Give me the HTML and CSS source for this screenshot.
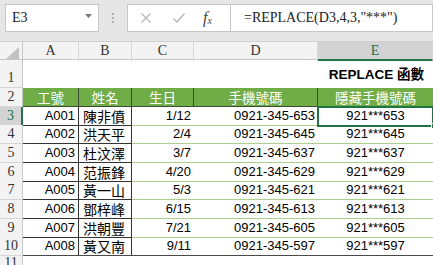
FILE: index.html
```html
<!DOCTYPE html>
<html lang="zh-Hant">
<head>
<meta charset="utf-8">
<link rel="stylesheet" href="styles.css">
</head>
<body>
<div class="app">
  <div class="toolbar">
    <div class="namebox">
      <span class="name">E3</span>
      <svg class="caret" width="7" height="4" viewBox="0 0 7 4"><path d="M0 0H7L3.5 4Z" fill="#777"/></svg>
    </div>
    <div class="grip">
      <span></span><span></span><span></span>
    </div>
    <div class="fxbox">
      <svg class="ico" width="12" height="12" viewBox="0 0 12 12"><path d="M1.5 1.5L10.5 10.5M10.5 1.5L1.5 10.5" stroke="#b4b4b4" stroke-width="1.2" fill="none"/></svg>
      <svg class="ico" width="14" height="12" viewBox="0 0 14 12"><path d="M1.5 6.5L5 10L12.5 1.5" stroke="#b4b4b4" stroke-width="1.2" fill="none"/></svg>
      <span class="fx">f<sub>x</sub></span>
    </div>
    <div class="formula">=REPLACE(D3,4,3,"***")</div>
  </div>

  <div class="sheet">
    <div class="row colhead">
      <div class="corner"><svg width="14" height="12" viewBox="0 0 14 12"><path d="M13 0V12H0Z" fill="#c2c2c2"/></svg></div>
      <div class="ch">A</div>
      <div class="ch">B</div>
      <div class="ch">C</div>
      <div class="ch">D</div>
      <div class="ch sel">E</div>
    </div>

    <div class="row r1">
      <div class="rh">1</div>
      <div class="c"></div>
      <div class="c"></div>
      <div class="c"></div>
      <div class="c"></div>
      <div class="c title">REPLACE 函數</div>
    </div>

    <div class="row data head">
      <div class="rh">2</div>
      <div class="c">工號</div>
      <div class="c">姓名</div>
      <div class="c">生日</div>
      <div class="c">手機號碼</div>
      <div class="c">隱藏手機號碼</div>
    </div>

    <div class="row data body">
      <div class="rh rsel">3</div>
      <div class="c a">A001</div>
      <div class="c b">陳非僨</div>
      <div class="c n">1/12</div>
      <div class="c n">0921-345-653</div>
      <div class="c e cur">921***653<span class="handle"></span></div>
    </div>
    <div class="row data body">
      <div class="rh">4</div>
      <div class="c a">A002</div>
      <div class="c b">洪天平</div>
      <div class="c n">2/4</div>
      <div class="c n">0921-345-645</div>
      <div class="c e">921***645</div>
    </div>
    <div class="row data body">
      <div class="rh">5</div>
      <div class="c a">A003</div>
      <div class="c b">杜汶澤</div>
      <div class="c n">3/7</div>
      <div class="c n">0921-345-637</div>
      <div class="c e">921***637</div>
    </div>
    <div class="row data body">
      <div class="rh">6</div>
      <div class="c a">A004</div>
      <div class="c b">范振鋒</div>
      <div class="c n">4/20</div>
      <div class="c n">0921-345-629</div>
      <div class="c e">921***629</div>
    </div>
    <div class="row data body">
      <div class="rh">7</div>
      <div class="c a">A005</div>
      <div class="c b">黃一山</div>
      <div class="c n">5/3</div>
      <div class="c n">0921-345-621</div>
      <div class="c e">921***621</div>
    </div>
    <div class="row data body">
      <div class="rh">8</div>
      <div class="c a">A006</div>
      <div class="c b">鄧梓峰</div>
      <div class="c n">6/15</div>
      <div class="c n">0921-345-613</div>
      <div class="c e">921***613</div>
    </div>
    <div class="row data body">
      <div class="rh">9</div>
      <div class="c a">A007</div>
      <div class="c b">洪朝豐</div>
      <div class="c n">7/21</div>
      <div class="c n">0921-345-605</div>
      <div class="c e">921***605</div>
    </div>
    <div class="row data body last">
      <div class="rh">10</div>
      <div class="c a">A008</div>
      <div class="c b">黃又南</div>
      <div class="c n">9/11</div>
      <div class="c n">0921-345-597</div>
      <div class="c e">921***597</div>
    </div>
    <div class="row r11">
      <div class="rh">11</div>
      <div class="c"></div>
      <div class="c"></div>
      <div class="c"></div>
      <div class="c"></div>
      <div class="c"></div>
    </div>
  </div>
</div>
</body>
</html>
```

FILE: styles.css
```css
* { box-sizing: border-box; }
html, body { margin: 0; padding: 0; background: #fff; }
.app {
  width: 433px;
  height: 265px;
  overflow: hidden;
  font-family: "Liberation Sans", Arial, "Noto Sans CJK TC", sans-serif;
  color: #000;
}

/* ---------- formula bar ---------- */
.toolbar {
  height: 42px;
  background: #e6e6e6;
  display: flex;
  align-items: flex-start;
  padding: 4px 0 0 5px;
  border-bottom: 1px solid #d0d0d0;
}
.namebox {
  flex: none;
  width: 94px;
  height: 28px;
  background: #fff;
  border: 1px solid #c6c6c6;
  display: flex;
  align-items: center;
  justify-content: space-between;
  padding: 0 6px 0 6px;
}
.name {
  font-family: "Liberation Serif", "Times New Roman", serif;
  font-size: 14px;
  color: #222;
}
.caret { margin-bottom: 4px; }
.grip {
  flex: none;
  width: 28px;
  height: 28px;
  display: flex;
  flex-direction: column;
  align-items: center;
  justify-content: center;
  gap: 2px;
}
.grip span {
  width: 2px;
  height: 2px;
  background: #b0b0b0;
}
.fxbox {
  flex: none;
  width: 103px;
  height: 28px;
  background: #fff;
  border: 1px solid #c6c6c6;
  border-right: none;
  display: flex;
  align-items: center;
  padding-left: 12px;
  gap: 20px;
}
.ico { flex: none; }
.fx {
  font-family: "Liberation Serif", serif;
  font-style: italic;
  font-size: 16px;
  color: #444;
  margin-left: -3px;
}
.fx sub { font-size: 10px; vertical-align: -1px; }
.formula {
  flex: 1;
  height: 28px;
  background: #fff;
  border: 1px solid #c6c6c6;
  display: flex;
  align-items: center;
  padding-left: 13px;
  font-family: "Liberation Serif", "Times New Roman", serif;
  font-size: 14px;
  color: #222;
  white-space: nowrap;
}

/* ---------- sheet ---------- */
.sheet { display: flex; flex-direction: column; }
.row {
  display: grid;
  grid-template-columns: 23px 56px 53px 62px 124px 115px;
}
.colhead {
  height: 18px;
  background: #f3f3f3;
  border-bottom: 1px solid #c6c6c6;
}
.corner {
  border-right: 1px solid #c6c6c6;
  display: flex;
  align-items: flex-end;
  justify-content: flex-end;
  padding: 0 2px 2px 0;
}
.ch {
  font-family: "Liberation Serif", "Times New Roman", serif;
  font-size: 14px;
  color: #333;
  text-align: center;
  line-height: 17px;
  border-right: 1px solid #d6d6d6;
}
.ch.sel {
  background: #d3d3d3;
  color: #217346;
  border-bottom: 2px solid #217346;
  height: 19px;
}

.rh {
  background: #f3f3f3;
  border-right: 1px solid #c6c6c6;
  border-bottom: 1px solid #d6d6d6;
  font-family: "Liberation Serif", "Times New Roman", serif;
  font-size: 14px;
  color: #333;
  text-align: center;
  display: flex;
  align-items: flex-end;
  justify-content: center;
  line-height: 18px;
}
.rh.rsel {
  background: #d3d3d3;
  color: #217346;
  border-right: 2px solid #217346;
}

.r1 { height: 28px; }
.c {
  font-size: 13px;
  line-height: 16px;
  white-space: nowrap;
  display: flex;
  align-items: flex-end;
  padding: 0 3px 1px 3px;
}
.title {
  justify-content: flex-end;
  font-weight: bold;
  font-size: 13.5px;
  padding: 0 9px 5px 0;
}

.data { height: 18.667px; }
.head .c {
  background: #70ad47;
  color: #fff;
  justify-content: center;
  font-size: 13.5px;
  border-right: 1px solid #3d4a34;
  border-bottom: 1px solid #3d4a34;
  font-family: "Noto Sans CJK TC", sans-serif;
  line-height: 17px;
  padding-bottom: 0;
  align-items: center;
}
.head .c:last-child { border-right: none; }

.body .c { border-bottom: 1px solid #a9d08e; }
.body .a { justify-content: flex-end; border-right: 1px solid #333; border-bottom-color: #333; }
.body .b {
  font-family: "Noto Sans CJK TC", sans-serif;
  font-size: 14px;
  line-height: 17px;
  padding: 0 0 0 4px;
  border-right: 1px solid #333;
  border-bottom-color: #333;
}
.body .n { justify-content: flex-end; }
.body .e { justify-content: center; }
.body.last .c { border-bottom: 1px solid #4a4a4a; }

.cur {
  position: relative;
  outline: 2px solid #217346;
  outline-offset: -1px;
}
.handle {
  position: absolute;
  right: -4px;
  bottom: -4px;
  width: 6px;
  height: 6px;
  background: #217346;
  border: 1px solid #fff;
}
.r11 { height: 12px; }
.r11 .rh { align-items: flex-start; line-height: 14px; border-bottom: none; }
```
